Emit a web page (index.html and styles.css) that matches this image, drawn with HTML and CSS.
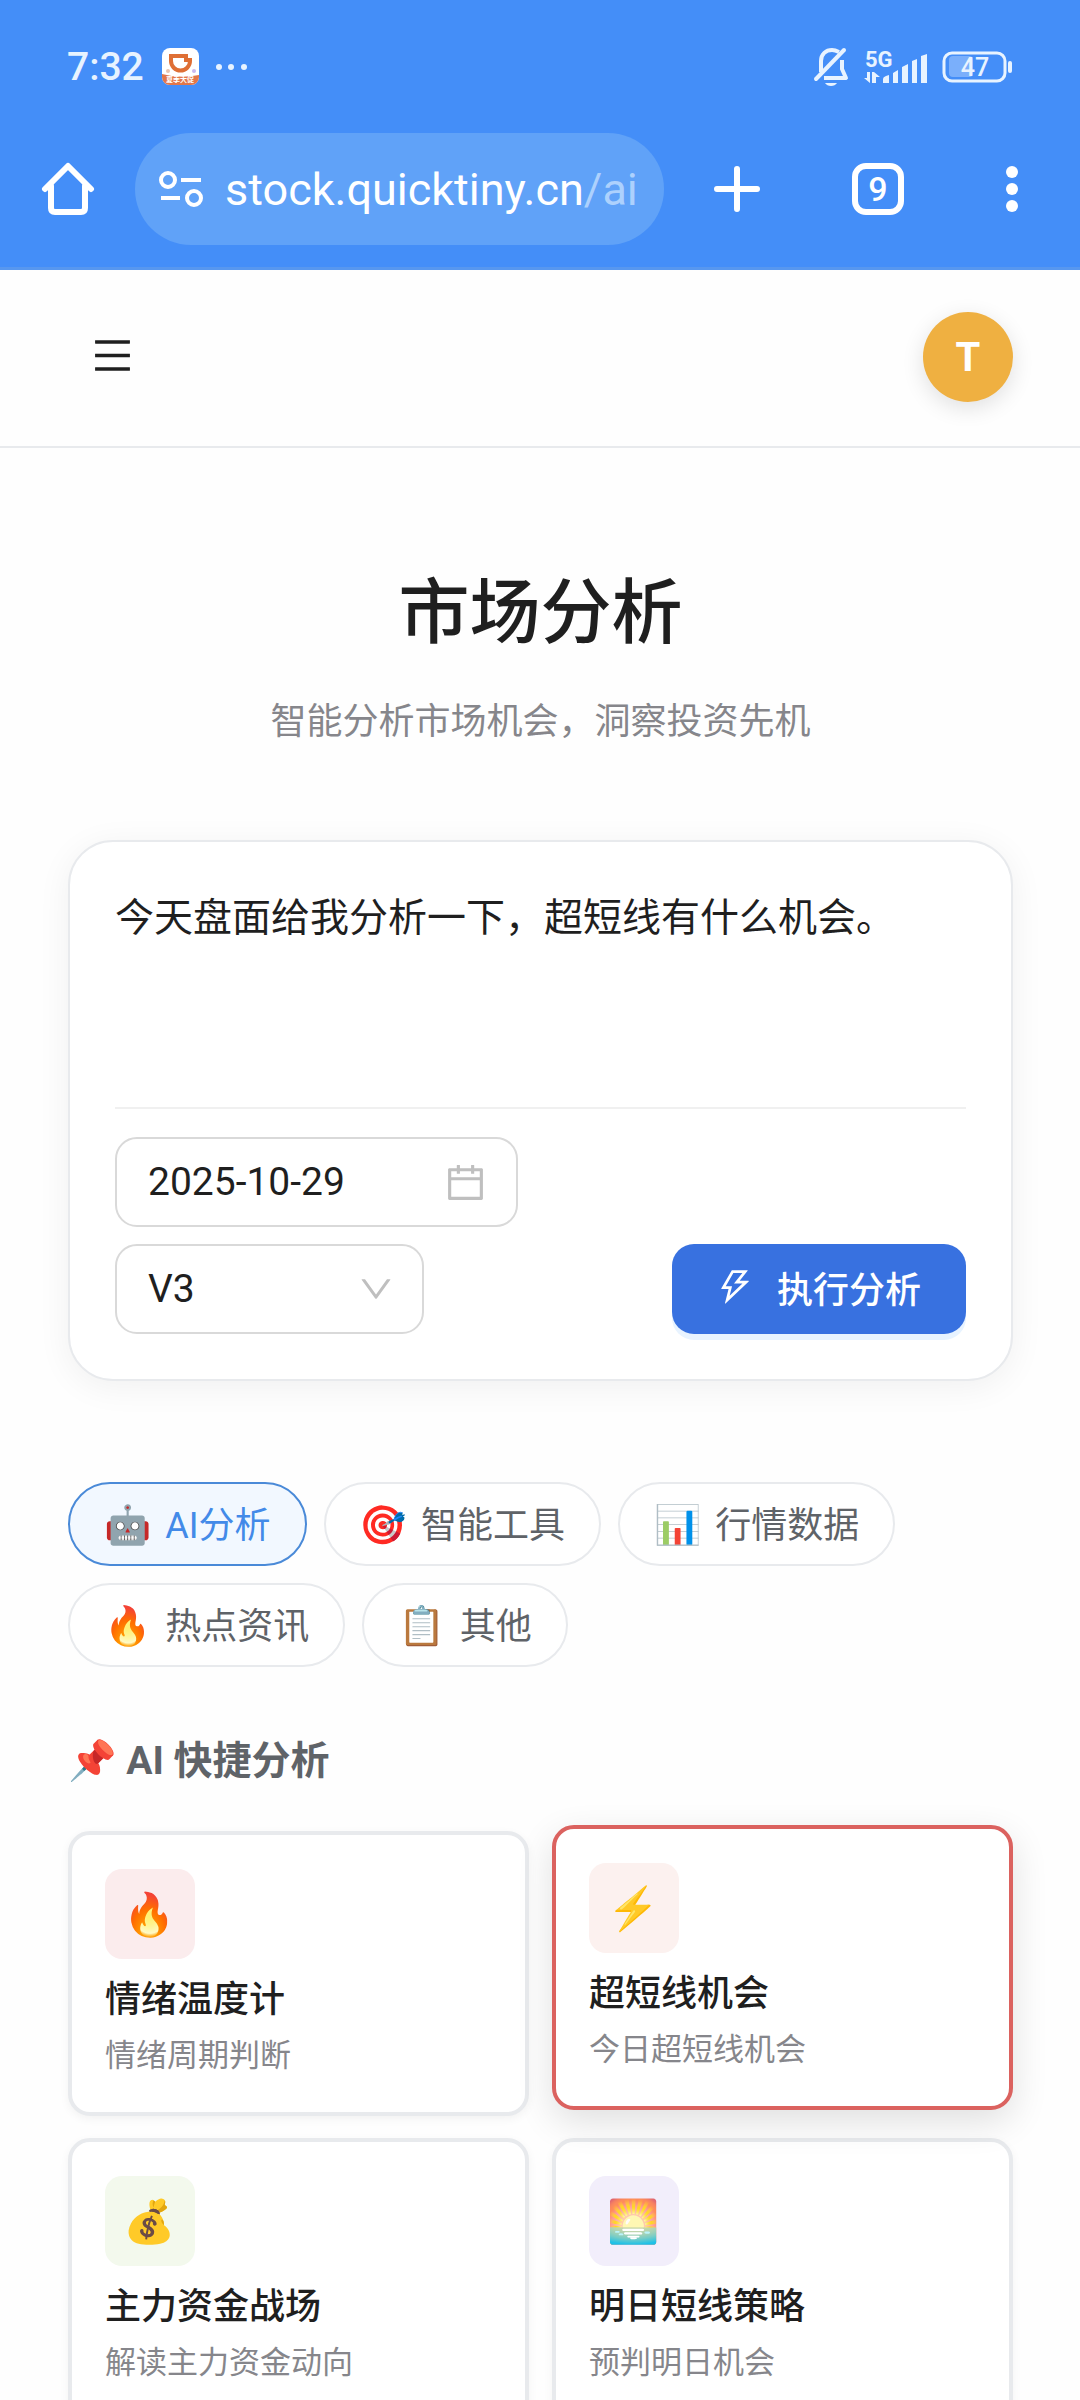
FILE: index.html
```html
<!DOCTYPE html>
<html lang="zh-CN">
<head>
    <meta charset="UTF-8">
    <meta name="viewport" content="width=device-width, initial-scale=1.0">
    <title>市场分析</title>
    <link rel="stylesheet" href="styles.css">
</head>
<body>
    <!-- 状态栏和浏览器工具栏 -->
    <div class="browser">
        <div class="status-bar">
            <span class="time">7:32</span>
            <svg class="app-icon" width="37" height="37" viewBox="0 0 37 37">
                <defs>
                    <clipPath id="app-clip"><rect width="37" height="37" rx="8"/></clipPath>
                </defs>
                <g clip-path="url(#app-clip)">
                    <rect width="37" height="37" fill="#fff"/>
                    <path d="M0 26 Q18 31 37 27 V37 H0 Z" fill="#e2764a"/>
                    <path d="M9 8 H24 V12 H28 V13 A9.5 9.5 0 0 1 9 13 Z" fill="none" stroke="#df6f35" stroke-width="4"/>
                    <circle cx="6" cy="23" r="2" fill="#e9c3b0"/>
                    <circle cx="32" cy="23" r="2" fill="#c9b8ee"/>
                    <text x="18" y="34" text-anchor="middle" class="app-text">夏季大促</text>
                </g>
            </svg>
            <svg class="more-dots" width="32" height="8" viewBox="0 0 32 8" fill="#e8f3ff">
                <circle cx="4" cy="4" r="3"/><circle cx="16" cy="4" r="3"/><circle cx="29" cy="4" r="3"/>
            </svg>
            <div class="status-right">
                <svg width="37" height="40" viewBox="0 0 37 40" fill="none" stroke="#e8f3ff" stroke-width="4">
                    <path d="M3 32 L31 3" stroke-linecap="round"/>
                    <path d="M8 25 V14 C8 7 13 3 19 3 C22 3 24 4 26 5"/>
                    <path d="M29 13 V22 L33 31 H11" stroke-linejoin="round"/>
                    <path d="M12 36 H24 Q22 39 18 39 Q14 39 12 36 Z" fill="#e8f3ff" stroke="none"/>
                </svg>
                <svg width="64" height="48" viewBox="0 -6 64 48" fill="#e8f3ff">
                    <text x="1" y="18" class="net-text">5G</text>
                    <path d="M3 23 H6 V34 L0 29 H3 Z M8 34 V23 H10 L16 28 H12 V34 Z"/>
                    <path d="M19 30 Q19 28 22 27 L25 26 V34 H19 Z M29 24 L34 21 V34 H29 Z M38 18 L44 15 V34 H38 Z M48 12 L53 10 V34 H48 Z M57 7 L63 5 V34 H57 Z"/>
                </svg>
                <svg width="71" height="32" viewBox="0 0 71 32">
                    <rect x="7" y="5" width="24" height="21" rx="4" fill="#7aaffb"/>
                    <rect x="2" y="2" width="61" height="28" rx="8" fill="none" stroke="#e8f3ff" stroke-width="3"/>
                    <rect x="66" y="10" width="4" height="12" rx="2" fill="#e8f3ff"/>
                    <text x="33" y="25" text-anchor="middle" class="battery-text">47</text>
                </svg>
            </div>
        </div>
        <div class="toolbar">
            <button class="tool-btn" aria-label="主页">
                <svg width="54" height="54" viewBox="0 0 54 54" fill="none" stroke="#fff" stroke-width="6" stroke-linecap="round" stroke-linejoin="round">
                    <path d="M4 27 L27 4 L50 27"/>
                    <path d="M10 24 V46 Q10 50 14 50 H40 Q44 50 44 46 V24"/>
                </svg>
            </button>
            <a class="address" href="#">
                <svg width="44" height="38" viewBox="0 0 44 38" fill="none" stroke="#fff" stroke-width="4">
                    <circle cx="9" cy="10" r="7"/>
                    <path d="M22 10 H42 M2 28 H21"/>
                    <circle cx="35" cy="28" r="7"/>
                </svg>
                <span class="url">stock.quicktiny.cn<span class="path">/ai</span></span>
            </a>
            <button class="tool-btn" aria-label="新建标签页">
                <svg width="48" height="48" viewBox="0 0 48 48" stroke="#fff" stroke-width="6" stroke-linecap="round">
                    <path d="M24 4 V44 M4 24 H44"/>
                </svg>
            </button>
            <button class="tab-count" aria-label="标签页">9</button>
            <button class="tool-btn" aria-label="菜单">
                <svg width="12" height="48" viewBox="0 0 12 48" fill="#fff">
                    <circle cx="6" cy="7" r="6"/><circle cx="6" cy="24" r="6"/><circle cx="6" cy="41" r="6"/>
                </svg>
            </button>
        </div>
    </div>

    <header class="app-header">
        <button class="menu-btn" aria-label="打开菜单">
            <svg width="39" height="39" viewBox="64 64 896 896" fill="#1f1f1f">
                <path d="M904 160H120c-4.400 0-8 3.600-8 8v64c0 4.400 3.600 8 8 8h784c4.400 0 8-3.600 8-8v-64c0-4.400-3.600-8-8-8zm0 624H120c-4.400 0-8 3.600-8 8v64c0 4.400 3.600 8 8 8h784c4.400 0 8-3.600 8-8v-64c0-4.400-3.600-8-8-8zm0-312H120c-4.400 0-8 3.600-8 8v64c0 4.400 3.600 8 8 8h784c4.400 0 8-3.600 8-8v-64c0-4.400-3.600-8-8-8z"/>
            </svg>
        </button>
        <button class="avatar">T</button>
    </header>

    <main class="page">
        <h1>市场分析</h1>
        <p class="subtitle">智能分析市场机会，洞察投资先机</p>

        <form class="query-card">
            <textarea class="query-text" aria-label="分析问题">今天盘面给我分析一下，超短线有什么机会。</textarea>
            <div class="controls">
                <div class="fields">
                    <div class="field date-field">
                        <input type="text" aria-label="日期" value="2025-10-29">
                        <svg width="39" height="39" viewBox="64 64 896 896" fill="#bfbfbf">
                            <path d="M880 184H712v-64c0-4.400-3.600-8-8-8h-56c-4.400 0-8 3.600-8 8v64H384v-64c0-4.400-3.600-8-8-8h-56c-4.400 0-8 3.600-8 8v64H144c-17.700 0-32 14.300-32 32v664c0 17.700 14.300 32 32 32h736c17.700 0 32-14.300 32-32V216c0-17.700-14.300-32-32-32zm-40 656H184V460h656v380zM184 392V256h128v48c0 4.400 3.600 8 8 8h56c4.400 0 8-3.600 8-8v-48h256v48c0 4.400 3.600 8 8 8h56c4.400 0 8-3.600 8-8v-48h128v136H184z"/>
                        </svg>
                    </div>
                    <div class="field model-field">
                        <select aria-label="模型">
                            <option>V3</option>
                            <option>R1</option>
                        </select>
                        <svg class="arrow" width="34" height="34" viewBox="64 64 896 896" fill="#bfbfbf">
                            <path d="M884 256h-75c-5.100 0-9.900 2.500-12.900 6.600L512 654.200 227.900 262.600c-3-4.100-7.800-6.600-12.900-6.600h-75c-6.500 0-10.300 7.400-6.500 12.700l352.600 486.100c12.800 17.600 39 17.600 51.700 0l352.600-486.100c3.900-5.300.1-12.700-6.400-12.700z"/>
                        </svg>
                    </div>
                </div>
                <button type="button" class="run-btn">
                    <svg width="36" height="36" viewBox="64 64 896 896" fill="#fff">
                        <path d="M848 359.300H627.700L825.800 109c4.100-5.300.4-13-6.300-13H436c-2.800 0-5.500 1.500-6.900 4L170 547.500c-3.100 5.300.7 12 6.900 12h174.400l-89.400 357.600c-1.900 7.800 7.500 13.300 13.300 7.700L853.500 373c5.200-4.900 1.700-13.700-5.500-13.700zM378.200 732.500l60.300-241H281.100l189.600-327.400h224.600L487 427.400h211L378.200 732.500z"/>
                    </svg>
                    执行分析
                </button>
            </div>
        </form>

        <nav class="tabs">
            <button class="tab active"><span class="emoji">🤖</span>AI分析</button>
            <button class="tab"><span class="emoji">🎯</span>智能工具</button>
            <button class="tab"><span class="emoji">📊</span>行情数据</button>
            <button class="tab"><span class="emoji">🔥</span>热点资讯</button>
            <button class="tab"><span class="emoji">📋</span>其他</button>
        </nav>

        <h2>📌 AI 快捷分析</h2>

        <div class="cards">
            <a class="card" href="#">
                <span class="card-icon red">🔥</span>
                <h3>情绪温度计</h3>
                <p>情绪周期判断</p>
            </a>
            <a class="card selected" href="#">
                <span class="card-icon orange">⚡</span>
                <h3>超短线机会</h3>
                <p>今日超短线机会</p>
            </a>
            <a class="card" href="#">
                <span class="card-icon green">💰</span>
                <h3>主力资金战场</h3>
                <p>解读主力资金动向</p>
            </a>
            <a class="card" href="#">
                <span class="card-icon purple">🌅</span>
                <h3>明日短线策略</h3>
                <p>预判明日机会</p>
            </a>
        </div>
    </main>
</body>
</html>
```
FILE: styles.css
```css
* {
    box-sizing: border-box;
}
body {
    margin: 0;
    font-family: Roboto, "Noto Sans CJK SC", "Noto Color Emoji", sans-serif;
    background-color: #fefefe;
    color: #1f1f1f;
}
button, input, select, textarea {
    font-family: inherit;
    color: inherit;
    margin: 0;
    padding: 0;
    border: none;
    background: none;
}
svg {
    display: block;
    flex-shrink: 0;
}
h1, h2, h3, p {
    margin: 0;
}
a {
    color: inherit;
    text-decoration: none;
}

/* 浏览器 */
.browser {
    background-color: #448ef8;
    border-bottom: 3px solid #5797ef;
}
.status-bar {
    display: flex;
    align-items: center;
    height: 133px;
    padding: 0 67px;
    color: #e8f3ff;
}
.time {
    font-size: 39px;
    font-weight: 500;
}
.app-icon {
    margin-left: 18px;
}
.app-text {
    font-size: 7px;
    font-weight: bold;
    fill: #fff;
}
.more-dots {
    margin-left: 16px;
}
.status-right {
    display: flex;
    align-items: center;
    gap: 14px;
    margin-left: auto;
}
.net-text {
    font-size: 22px;
    font-weight: bold;
}
.battery-text {
    font-size: 25px;
    font-weight: 500;
    fill: #e8f3ff;
}
.toolbar {
    display: flex;
    align-items: center;
    padding: 0 62px 22px 41px;
}
.tool-btn {
    display: flex;
}
.address {
    display: flex;
    flex: 1;
    align-items: center;
    gap: 22px;
    min-width: 0;
    height: 112px;
    margin: 0 49px 0 40px;
    padding: 0 24px;
    border-radius: 56px;
    background-color: #60a2f8;
    color: #fff;
}
.url {
    font-size: 45px;
    white-space: nowrap;
}
.path {
    color: #add1fd;
}
.tab-count {
    flex-shrink: 0;
    width: 52px;
    height: 52px;
    margin: 0 102px 0 91px;
    border: 6px solid #fff;
    border-radius: 14px;
    color: #fff;
    font-size: 34px;
    font-weight: 500;
    line-height: 40px;
}

/* 页面头部 */
.app-header {
    display: flex;
    align-items: center;
    justify-content: space-between;
    height: 178px;
    padding: 0 67px 2px 93px;
    border-bottom: 2px solid #e8eaed;
}
.menu-btn {
    display: flex;
    padding-bottom: 4px;
}
.avatar {
    width: 90px;
    height: 90px;
    border-radius: 50%;
    background-color: #efb041;
    color: #fff;
    font-size: 40px;
    font-weight: bold;
    box-shadow: 0 6px 22px rgba(0, 0, 0, 0.12);
}

.page {
    padding: 115px 67px 60px 68px;
}
h1 {
    font-size: 71px;
    font-weight: 500;
    line-height: 100px;
    text-align: center;
}
.subtitle {
    margin-top: 33px;
    color: #86868b;
    font-size: 36px;
    line-height: 52px;
    text-align: center;
}

/* 输入卡片 */
.query-card {
    margin-top: 92px;
    padding: 45px;
    border: 2px solid #e8eaed;
    border-radius: 45px;
    background-color: #fff;
    box-shadow: 0 6px 34px rgba(0, 0, 0, 0.06);
}
.query-text {
    display: block;
    width: 100%;
    height: 220px;
    outline: none;
    resize: none;
    font-size: 39px;
    line-height: 62px;
}
.controls {
    display: flex;
    align-items: flex-end;
    justify-content: space-between;
    padding-top: 28px;
    border-top: 2px solid #f0f0f0;
}
.fields {
    display: grid;
    gap: 17px;
    justify-items: start;
}
.field {
    display: flex;
    position: relative;
    align-items: center;
    height: 90px;
    border: 2px solid #d9d9d9;
    border-radius: 22px;
    font-size: 39px;
}
.date-field {
    width: 403px;
    padding: 0 31px;
}
.model-field {
    width: 309px;
}
.field input {
    flex: 1;
    min-width: 0;
    font-size: 39px;
}
.field select {
    width: 100%;
    height: 100%;
    padding: 0 31px;
    appearance: none;
    font-size: 39px;
}
.arrow {
    position: absolute;
    right: 29px;
    pointer-events: none;
}
.run-btn {
    display: flex;
    align-items: center;
    gap: 24px;
    height: 90px;
    padding: 0 45px 4px;
    border-radius: 22px;
    background-color: #3871e0;
    color: #fff;
    font-size: 36px;
    font-weight: 500;
    box-shadow: 0 6px 0 #e8f3ff;
}

/* 分类标签 */
.tabs {
    display: flex;
    flex-wrap: wrap;
    gap: 17px;
    margin-top: 101px;
}
.tab {
    height: 84px;
    padding: 0 34px 5px;
    border: 2px solid #e8eaed;
    border-radius: 42px;
    background-color: #fff;
    color: #5f6368;
    font-size: 36px;
    white-space: nowrap;
}
.tab.active {
    border-color: #4a8ad8;
    background-color: #f2f8ff;
    color: #438ae8;
}
.emoji {
    margin-right: 14px;
    font-size: 38px;
}
h2 {
    margin: 67px 0 42px;
    color: #5f6368;
    font-size: 39px;
    font-weight: bold;
    line-height: 55px;
}

/* 快捷分析卡片 */
.cards {
    display: grid;
    grid-template-columns: 1fr 1fr;
    gap: 22px 23px;
}
.card {
    height: 285px;
    padding: 34px 33px;
    border: 4px solid #e8eaed;
    border-radius: 22px;
    background-color: #fff;
    box-shadow: 0 3px 10px rgba(0, 0, 0, 0.05);
}
.card.selected {
    border-color: #db625f;
    box-shadow: 0 12px 36px rgba(0, 0, 0, 0.12);
    transform: translateY(-6px);
}
.card-icon {
    display: flex;
    align-items: center;
    justify-content: center;
    width: 90px;
    height: 90px;
    border-radius: 17px;
    font-size: 42px;
}
.red {
    background-color: #fbeced;
}
.orange {
    background-color: #fcf1ef;
}
.green {
    background-color: #f3f9ed;
}
.purple {
    background-color: #f2eefb;
}
h3 {
    margin-top: 14px;
    font-size: 36px;
    font-weight: 500;
    line-height: 54px;
}
.card p {
    margin-top: 6px;
    color: #86868b;
    font-size: 31px;
    line-height: 46px;
}
```
